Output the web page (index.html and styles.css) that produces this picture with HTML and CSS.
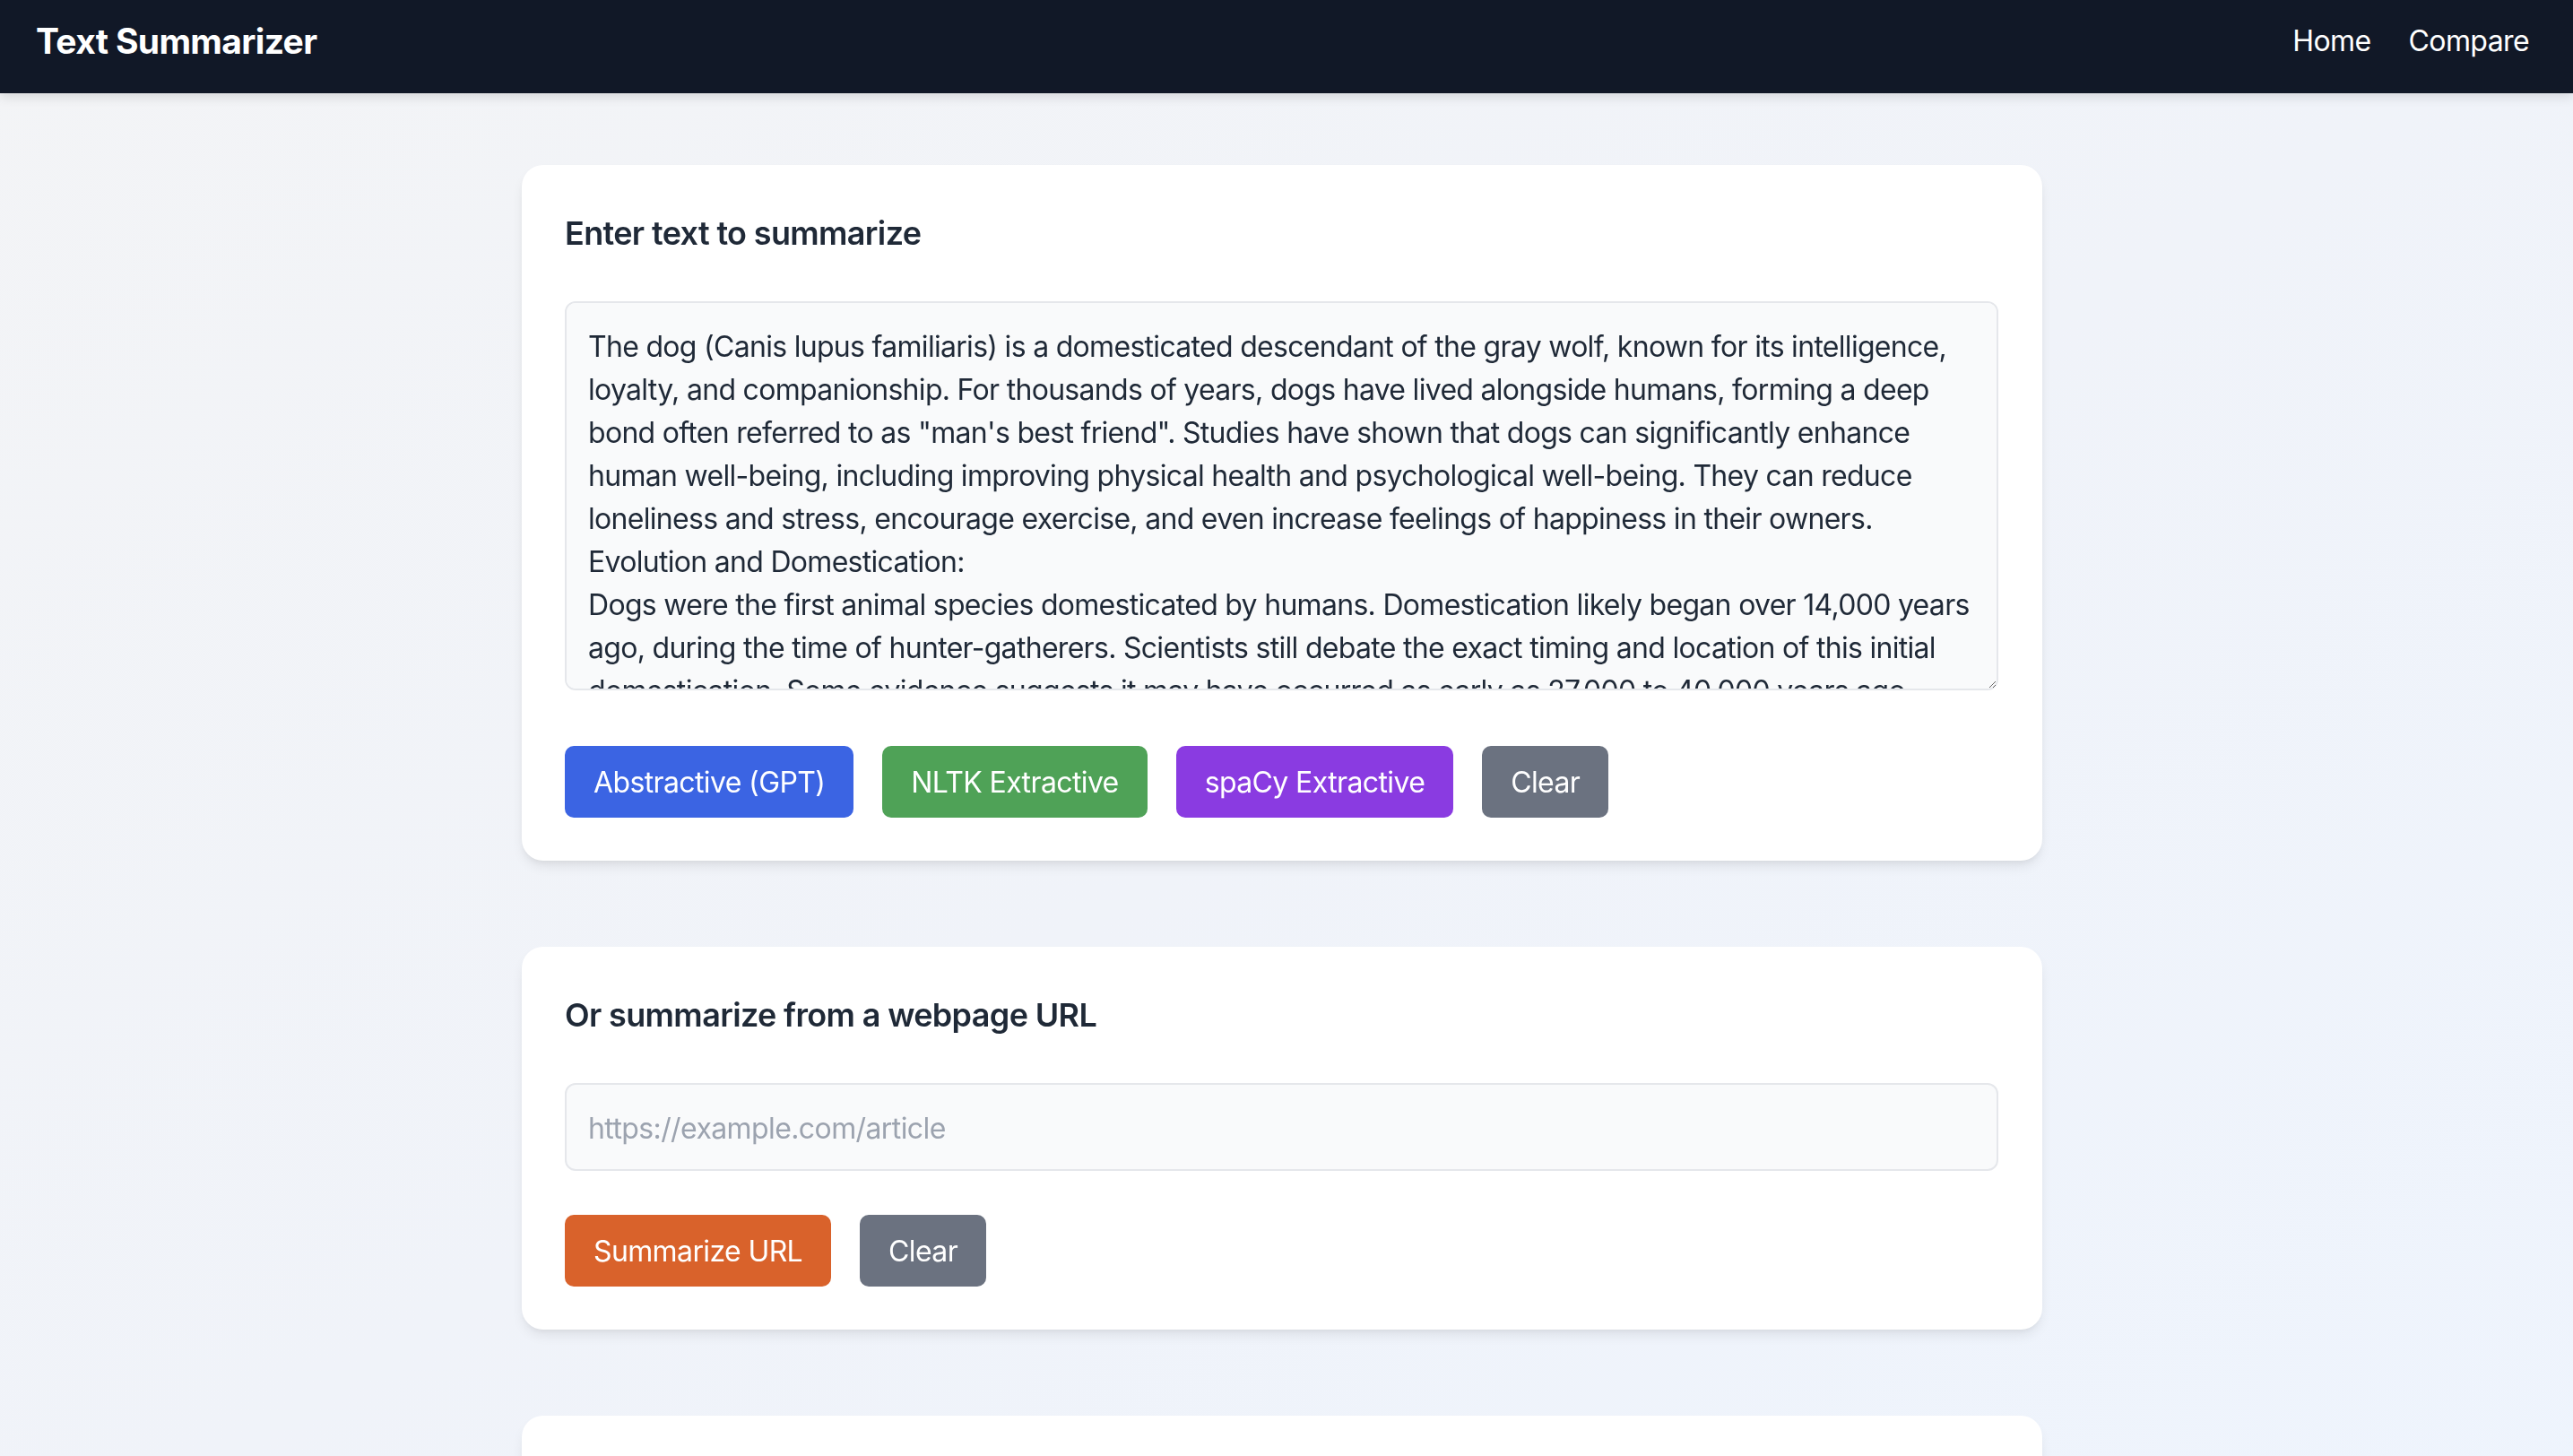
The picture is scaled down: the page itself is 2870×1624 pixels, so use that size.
FILE: index.html
```html
<!DOCTYPE html>
<html lang="en">
<head>
<meta charset="utf-8">
<title>Text Summarizer</title>
<link rel="stylesheet" href="styles.css">
</head>
<body>
<header class="topbar">
  <div class="brand">Text Summarizer</div>
  <nav class="nav">
    <a href="#" class="nav-link">Home</a>
    <a href="#" class="nav-link">Compare</a>
  </nav>
</header>
<main class="main">
  <section class="card">
    <h2 class="card-title">Enter text to summarize</h2>
    <textarea class="text-input">The dog (Canis lupus familiaris) is a domesticated descendant of the gray wolf, known for its intelligence,
loyalty, and companionship. For thousands of years, dogs have lived alongside humans, forming a deep
bond often referred to as "man's best friend". Studies have shown that dogs can significantly enhance
human well-being, including improving physical health and psychological well-being. They can reduce
loneliness and stress, encourage exercise, and even increase feelings of happiness in their owners.
Evolution and Domestication:
Dogs were the first animal species domesticated by humans. Domestication likely began over 14,000 years
ago, during the time of hunter-gatherers. Scientists still debate the exact timing and location of this initial
domestication. Some evidence suggests it may have occurred as early as 27,000 to 40,000 years ago.</textarea>
    <div class="actions">
      <button class="btn btn-blue">Abstractive (GPT)</button>
      <button class="btn btn-green">NLTK Extractive</button>
      <button class="btn btn-purple">spaCy Extractive</button>
      <button class="btn btn-gray">Clear</button>
    </div>
  </section>
  <section class="card">
    <h2 class="card-title">Or summarize from a webpage URL</h2>
    <input class="url-input" type="text" placeholder="https://example.com/article">
    <div class="actions">
      <button class="btn btn-orange">Summarize URL</button>
      <button class="btn btn-gray">Clear</button>
    </div>
  </section>
  <section class="card card-empty"></section>
</main>
</body>
</html>
```

FILE: styles.css
```css
* { box-sizing: border-box; }
html, body { margin: 0; padding: 0; }
body {
  font-family: Inter, "Noto Sans", "Liberation Sans", sans-serif;
  color: #1f2937;
  min-height: 1624px;
  background: linear-gradient(to bottom right, #f3f4f6 0%, #f0f3f9 50%, #eef4fd 100%);
  overflow: hidden;
}
.topbar {
  height: 104px;
  background: #111827;
  display: flex;
  align-items: center;
  justify-content: space-between;
  padding: 0 49px 14px 40px;
  box-shadow: 0 4px 12px rgba(0,0,0,0.12);
  position: relative;
  z-index: 1;
}
.brand {
  color: #fff;
  font-size: 39px;
  font-weight: 700;
  letter-spacing: -0.65px;
}
.nav { display: flex; gap: 42px; }
.nav-link {
  color: #fff;
  text-decoration: none;
  font-size: 32px;
  letter-spacing: -0.6px;
}
.main {
  padding: 80px 10px 0 0;
  display: flex;
  flex-direction: column;
  align-items: center;
  gap: 96px;
}
.card {
  width: 1696px;
  background: #fff;
  border-radius: 24px;
  padding: 48px 49px 48px 48px;
  box-shadow: 0 8px 14px -2px rgba(0,0,0,0.08), 0 4px 8px -4px rgba(0,0,0,0.08);
}
.card-empty { height: 200px; }
.card-title {
  margin: 0 0 48px 0;
  font-size: 36px;
  line-height: 56px;
  font-weight: 600;
  color: #1f2937;
  letter-spacing: -0.65px;
}
.text-input {
  display: block;
  width: 100%;
  height: 434px;
  margin: 0 0 62px 0;
  padding: 25px 24px 23px 24px;
  border: 2px solid #e5e7eb;
  border-radius: 12px;
  background: #f9fafb;
  font-family: inherit;
  font-size: 32px;
  line-height: 48px;
  letter-spacing: -0.7px;
  color: #1f2937;
  white-space: pre-wrap;
  resize: vertical;
  outline: none;
}
.url-input {
  display: block;
  width: 100%;
  height: 98px;
  margin: 0 0 49px 0;
  padding: 2px 24px 0 24px;
  border: 2px solid #e5e7eb;
  border-radius: 12px;
  background: #f9fafb;
  font-family: inherit;
  font-size: 32px;
  letter-spacing: -0.6px;
  color: #1f2937;
  outline: none;
}
.url-input::placeholder { color: #9ca3af; }
.actions { display: flex; gap: 32px; }
.btn {
  height: 80px;
  padding: 0 32px;
  border: none;
  border-radius: 10px;
  color: #fff;
  font-family: inherit;
  font-size: 32px;
  letter-spacing: -0.62px;
  cursor: pointer;
}
.btn-blue { background: #3b64e3; }
.btn-green { background: #4fa257; }
.btn-purple { background: #8a3be1; }
.btn-gray { background: #6b7280; }
.btn-orange { background: #d9622b; }
```
